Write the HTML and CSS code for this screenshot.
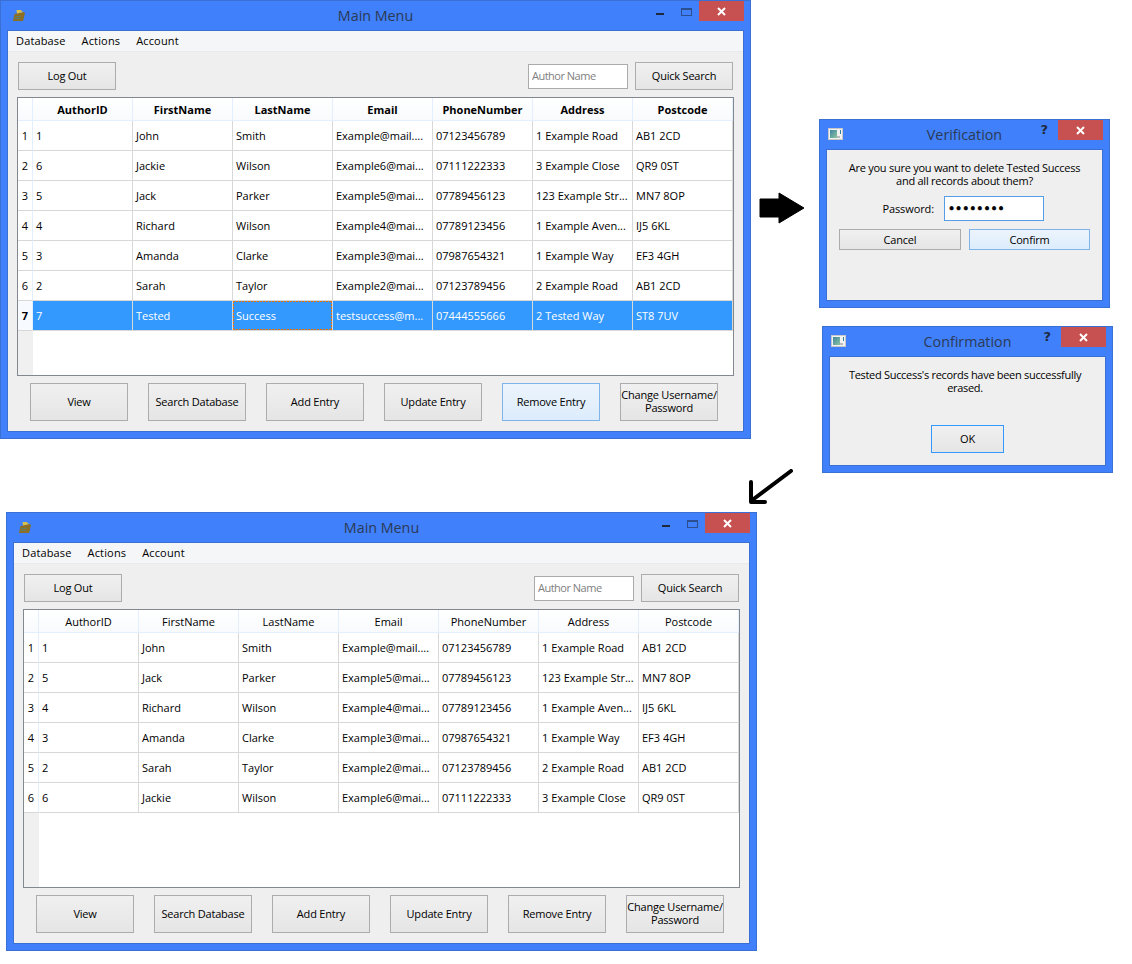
FILE: index.html
```html
<!DOCTYPE html>
<html lang="en">
<head>
    <meta charset="UTF-8">
    <meta name="viewport" content="width=device-width, initial-scale=1.0">
    <title>Remove Entry Walkthrough</title>
    <link rel="stylesheet" href="styles.css">
</head>
<body>
    <svg width="0" height="0" class="defs">
        <defs>
            <linearGradient id="dialog-fill" x1="0" y1="0" x2="1" y2="1">
                <stop offset="0" stop-color="#3f86a0"/>
                <stop offset="1" stop-color="#8cc4a0"/>
            </linearGradient>
        </defs>
        <symbol id="app-icon" viewBox="0 0 14 14">
            <path d="M2.5 5 L11.5 3 L13 4 L11 12 L1 12 Z" fill="#8c6f22"/>
            <path d="M4.5 1 L9 1 L10 2.5 L11.5 3 L5 4.5 Z" fill="#d8c04a"/>
            <path d="M3 7.5 H9 M2.6 9.5 H8" stroke="#5f7f6a" stroke-width="1"/>
        </symbol>
        <symbol id="dialog-icon" viewBox="0 0 15 12">
            <rect x=".5" y=".5" width="14" height="11" fill="#f2f2f2" stroke="#c8c8c8"/>
            <rect x="2" y="2" width="7" height="8" fill="url(#dialog-fill)"/>
            <rect x="9" y="8" width="3" height="2" fill="#bcbcbc"/>
            <rect x="12" y="2" width="1" height="4" fill="#2f7fa0"/>
        </symbol>
        <symbol id="close-x" viewBox="0 0 9 9">
            <path d="M1 1 L8 8 M8 1 L1 8" stroke="#ffffff" stroke-width="2" fill="none"/>
        </symbol>
    </svg>

    <!-- main menu, row 7 selected -->
    <div class="window main-window window-before">
        <div class="titlebar">
            <svg class="app-icon" width="14" height="14"><use href="#app-icon"/></svg>
            <span class="title">Main Menu</span>
            <div class="controls">
                <span class="btn-min"></span>
                <span class="btn-max"></span>
                <span class="btn-close"><svg width="9" height="9"><use href="#close-x"/></svg></span>
            </div>
        </div>
        <div class="client">
            <div class="menubar">
                <span>Database</span>
                <span>Actions</span>
                <span>Account</span>
            </div>
            <div class="content">
                <div class="toolbar">
                    <button class="btn toolbar-btn">Log Out</button>
                    <div class="spacer"></div>
                    <input class="search" type="text" placeholder="Author Name">
                    <button class="btn toolbar-btn">Quick Search</button>
                </div>
                <div class="table-frame">
                    <table class="grid bold-head">
                        <thead>
                            <tr><th class="corner"></th><th>AuthorID</th><th>FirstName</th><th>LastName</th><th>Email</th><th>PhoneNumber</th><th>Address</th><th>Postcode</th></tr>
                        </thead>
                        <tbody>
                            <tr><th>1</th><td>1</td><td>John</td><td>Smith</td><td>Example@mail....</td><td>07123456789</td><td>1 Example Road</td><td>AB1 2CD</td></tr>
                            <tr><th>2</th><td>6</td><td>Jackie</td><td>Wilson</td><td>Example6@mai...</td><td>07111222333</td><td>3 Example Close</td><td>QR9 0ST</td></tr>
                            <tr><th>3</th><td>5</td><td>Jack</td><td>Parker</td><td>Example5@mai...</td><td>07789456123</td><td>123 Example Str...</td><td>MN7 8OP</td></tr>
                            <tr><th>4</th><td>4</td><td>Richard</td><td>Wilson</td><td>Example4@mai...</td><td>07789123456</td><td>1 Example Aven...</td><td>IJ5 6KL</td></tr>
                            <tr><th>5</th><td>3</td><td>Amanda</td><td>Clarke</td><td>Example3@mai...</td><td>07987654321</td><td>1 Example Way</td><td>EF3 4GH</td></tr>
                            <tr><th>6</th><td>2</td><td>Sarah</td><td>Taylor</td><td>Example2@mai...</td><td>07123789456</td><td>2 Example Road</td><td>AB1 2CD</td></tr>
                            <tr class="selected"><th>7</th><td>7</td><td>Tested</td><td class="focus">Success</td><td>testsuccess@m...</td><td>07444555666</td><td>2 Tested Way</td><td>ST8 7UV</td></tr>
                        </tbody>
                    </table>
                </div>
                <div class="actions">
                    <button class="btn">View</button>
                    <button class="btn">Search Database</button>
                    <button class="btn">Add Entry</button>
                    <button class="btn">Update Entry</button>
                    <button class="btn btn-hover">Remove Entry</button>
                    <button class="btn">Change Username/<br>Password</button>
                </div>
            </div>
        </div>
    </div>

    <svg class="arrow arrow-right" width="46" height="32" viewBox="0 0 46 32">
        <path d="M1 7 H20 V1 L45 16 L20 31 V25 H1 Z" fill="#000" stroke="#000" stroke-linejoin="round"/>
    </svg>

    <!-- password prompt -->
    <div class="window dialog dialog-verify">
        <div class="titlebar">
            <svg class="dialog-icon" width="15" height="12"><use href="#dialog-icon"/></svg>
            <span class="title">Verification</span>
            <div class="controls">
                <span class="btn-help">?</span>
                <span class="btn-close"><svg width="9" height="9"><use href="#close-x"/></svg></span>
            </div>
        </div>
        <div class="client dialog-body">
            <p class="message">Are you sure you want to delete Tested Success<br>and all records about them?</p>
            <div class="password-row">
                <label for="password">Password:</label>
                <input id="password" class="password" type="password" value="12345678">
            </div>
            <div class="dialog-buttons">
                <button class="btn">Cancel</button>
                <button class="btn btn-hover">Confirm</button>
            </div>
        </div>
    </div>

    <!-- erased message -->
    <div class="window dialog dialog-confirm">
        <div class="titlebar">
            <svg class="dialog-icon" width="15" height="12"><use href="#dialog-icon"/></svg>
            <span class="title">Confirmation</span>
            <div class="controls">
                <span class="btn-help">?</span>
                <span class="btn-close"><svg width="9" height="9"><use href="#close-x"/></svg></span>
            </div>
        </div>
        <div class="client dialog-body">
            <p class="message">Tested Success's records have been successfully<br>erased.</p>
            <button class="btn btn-ok">OK</button>
        </div>
    </div>

    <svg class="arrow arrow-down" width="46" height="36" viewBox="0 0 46 36">
        <path d="M43 2 L3 32 M3 13 V33 H17" fill="none" stroke="#000" stroke-width="4" stroke-linecap="round" stroke-linejoin="round"/>
    </svg>

    <!-- main menu after the delete -->
    <div class="window main-window window-after">
        <div class="titlebar">
            <svg class="app-icon" width="14" height="14"><use href="#app-icon"/></svg>
            <span class="title">Main Menu</span>
            <div class="controls">
                <span class="btn-min"></span>
                <span class="btn-max"></span>
                <span class="btn-close"><svg width="9" height="9"><use href="#close-x"/></svg></span>
            </div>
        </div>
        <div class="client">
            <div class="menubar">
                <span>Database</span>
                <span>Actions</span>
                <span>Account</span>
            </div>
            <div class="content">
                <div class="toolbar">
                    <button class="btn toolbar-btn">Log Out</button>
                    <div class="spacer"></div>
                    <input class="search" type="text" placeholder="Author Name">
                    <button class="btn toolbar-btn">Quick Search</button>
                </div>
                <div class="table-frame">
                    <table class="grid">
                        <thead>
                            <tr><th class="corner"></th><th>AuthorID</th><th>FirstName</th><th>LastName</th><th>Email</th><th>PhoneNumber</th><th>Address</th><th>Postcode</th></tr>
                        </thead>
                        <tbody>
                            <tr><th>1</th><td>1</td><td>John</td><td>Smith</td><td>Example@mail....</td><td>07123456789</td><td>1 Example Road</td><td>AB1 2CD</td></tr>
                            <tr><th>2</th><td>5</td><td>Jack</td><td>Parker</td><td>Example5@mai...</td><td>07789456123</td><td>123 Example Str...</td><td>MN7 8OP</td></tr>
                            <tr><th>3</th><td>4</td><td>Richard</td><td>Wilson</td><td>Example4@mai...</td><td>07789123456</td><td>1 Example Aven...</td><td>IJ5 6KL</td></tr>
                            <tr><th>4</th><td>3</td><td>Amanda</td><td>Clarke</td><td>Example3@mai...</td><td>07987654321</td><td>1 Example Way</td><td>EF3 4GH</td></tr>
                            <tr><th>5</th><td>2</td><td>Sarah</td><td>Taylor</td><td>Example2@mai...</td><td>07123789456</td><td>2 Example Road</td><td>AB1 2CD</td></tr>
                            <tr><th>6</th><td>6</td><td>Jackie</td><td>Wilson</td><td>Example6@mai...</td><td>07111222333</td><td>3 Example Close</td><td>QR9 0ST</td></tr>
                        </tbody>
                    </table>
                </div>
                <div class="actions">
                    <button class="btn">View</button>
                    <button class="btn">Search Database</button>
                    <button class="btn">Add Entry</button>
                    <button class="btn">Update Entry</button>
                    <button class="btn">Remove Entry</button>
                    <button class="btn">Change Username/<br>Password</button>
                </div>
            </div>
        </div>
    </div>
</body>
</html>
```

FILE: styles.css
```css
/* General Reset */
* {
    margin: 0;
    padding: 0;
    box-sizing: border-box;
}

body {
    position: relative;
    width: 1132px;
    height: 964px;
    overflow: hidden;
    background-color: #ffffff;
    color: #000000;
    font-family: "Open Sans", sans-serif;
    font-size: 11px;
}

.defs {
    position: absolute;
}

/* Windows sit on a free canvas */
.window {
    position: absolute;
    display: flex;
    flex-direction: column;
    background-color: #4080fa;
    border: 1px solid #3a70d4;
    padding: 0 6px 6px;
}

.main-window {
    width: 751px;
    height: 439px;
}

.window-before {
    left: 0;
    top: 0;
}

.window-after {
    left: 6px;
    top: 512px;
}

.dialog-verify {
    left: 819px;
    top: 119px;
    width: 291px;
    height: 189px;
}

.dialog-confirm {
    left: 822px;
    top: 326px;
    width: 291px;
    height: 147px;
}

/* Title bar */
.titlebar {
    position: relative;
    flex: none;
    height: 29px;
    display: flex;
    align-items: center;
    justify-content: center;
}

.title {
    font-size: 14.3px;
    color: #2b3a55;
    margin-bottom: 1px;
}

.app-icon {
    position: absolute;
    left: 5px;
    top: 8px;
}

.dialog-icon {
    position: absolute;
    left: 2px;
    top: 8px;
}

.controls {
    position: absolute;
    right: 0;
    top: 0;
    height: 20px;
}

.btn-close {
    position: absolute;
    right: 0;
    top: 0;
    width: 45px;
    height: 20px;
    background-color: #c75050;
    display: flex;
    align-items: center;
    justify-content: center;
}

.btn-min {
    position: absolute;
    right: 80px;
    top: 12px;
    width: 8px;
    height: 2px;
    background-color: #1f2a3f;
}

.btn-max {
    position: absolute;
    right: 52px;
    top: 7px;
    width: 11px;
    height: 8px;
    border: 1px solid #2c4f8f;
    border-top-width: 2px;
}

.btn-help {
    position: absolute;
    right: 55px;
    top: 2px;
    color: #1f2a3f;
    font-family: "DejaVu Sans", sans-serif;
    font-size: 13px;
    font-weight: bold;
}

/* Client area */
.client {
    flex: 1;
    background-color: #efefef;
    border: 1px solid #3a70d4;
    display: flex;
    flex-direction: column;
}

.menubar {
    flex: none;
    height: 21px;
    display: flex;
    align-items: center;
    gap: 16px;
    padding: 0 0 2px 8px;
    background-color: #f5f6f7;
    border-bottom: 1px solid #e8e9ea;
    letter-spacing: .15px;
}

.content {
    padding: 10px 9px 0;
    display: flex;
    flex-direction: column;
}

.toolbar {
    display: flex;
    align-items: center;
    padding: 0 1px;
    height: 28px;
}

.spacer {
    flex: 1;
}

.btn {
    width: 98px;
    height: 38px;
    padding: 0 0 2px;
    border: 1px solid #acacac;
    background: linear-gradient(#f0f0f0, #e5e5e5);
    color: #000000;
    font-family: inherit;
    font-size: 11px;
    line-height: 13px;
    letter-spacing: -.2px;
    white-space: nowrap;
}

.btn-hover {
    border-color: #7eb4ea;
    background: linear-gradient(#ecf4fc, #dcecfc);
}

.toolbar-btn {
    height: 28px;
}

.search {
    width: 100px;
    height: 25px;
    margin-right: 7px;
    padding: 0 0 2px 3px;
    border: 1px solid #ababab;
    background-color: #ffffff;
    font-family: inherit;
    font-size: 11px;
    letter-spacing: -.5px;
}

.search::placeholder {
    color: #808080;
}

/* Table */
.table-frame {
    margin-top: 7px;
    width: 717px;
    height: 279px;
    border: 1px solid #828790;
    background: linear-gradient(to right, #f0f0f0 15px, #ffffff 15px);
}

.grid {
    table-layout: fixed;
    width: 715px;
    border-collapse: separate;
    border-spacing: 0;
}

.grid th,
.grid td {
    overflow: hidden;
    white-space: nowrap;
    font-weight: normal;
}

.grid thead th {
    width: 100px;
    height: 23px;
    background: linear-gradient(#ffffff, #f8fafd);
    border-right: 1px solid #e3efff;
    border-bottom: 1px solid #e3efff;
    text-align: center;
}

.grid thead th.corner {
    width: 15px;
}

.bold-head thead th {
    font-weight: bold;
}

.grid tbody th {
    height: 30px;
    background-color: #ffffff;
    border-right: 1px solid #e3efff;
    border-bottom: 1px solid #d8d8d8;
    text-align: center;
}

.grid td {
    height: 30px;
    padding-left: 3px;
    background-color: #ffffff;
    border-right: 1px solid #d8d8d8;
    border-bottom: 1px solid #d8d8d8;
}

.grid tr.selected td {
    background-color: #3399ff;
    color: #ffffff;
}

.grid tr.selected th {
    font-weight: bold;
    background-color: #f7fafe;
}

/* dotted focus box round the current cell, drawn as stripes */
.grid tr.selected td.focus {
    background-image:
        repeating-linear-gradient(90deg, #e8700a 0 2px, transparent 2px 3px),
        repeating-linear-gradient(90deg, #e8700a 0 2px, transparent 2px 3px),
        repeating-linear-gradient(0deg, #e8700a 0 2px, transparent 2px 3px),
        repeating-linear-gradient(0deg, #e8700a 0 2px, transparent 2px 3px);
    background-size: 100% 1px, 100% 1px, 1px 100%, 1px 100%;
    background-position: left top, left bottom, left top, right top;
    background-repeat: no-repeat;
    background-origin: padding-box;
    background-clip: padding-box;
}

.actions {
    margin-top: 7px;
    padding-left: 13px;
    display: flex;
    gap: 20px;
}

/* Dialogs */
.message {
    padding-top: 11px;
    text-align: center;
    line-height: 13px;
    letter-spacing: -.25px;
}

.dialog-confirm .message {
    padding-right: 5px;
    letter-spacing: -.3px;
}

.password-row {
    margin-top: 9px;
    display: flex;
    align-items: center;
    justify-content: flex-end;
    padding-right: 58px;
    gap: 10px;
}

.password-row label {
    letter-spacing: -.1px;
}

.password {
    width: 100px;
    height: 25px;
    padding-left: 3px;
    border: 1px solid #569de5;
    background-color: #ffffff;
    font-family: "DejaVu Sans", sans-serif;
    font-size: 12px;
    -webkit-text-stroke: .6px #000000;
    outline: none;
}

.dialog-buttons {
    margin-top: 8px;
    padding-left: 12px;
    display: flex;
    gap: 8px;
}

.dialog-buttons .btn {
    width: 122px;
    height: 21px;
    padding: 0;
}

.dialog-buttons .btn-hover {
    width: 121px;
}

.btn-ok {
    align-self: center;
    width: 73px;
    height: 28px;
    margin-top: 31px;
    border-color: #3399ff;
}

/* Hand drawn arrows */
.arrow {
    position: absolute;
}

.arrow-right {
    left: 759px;
    top: 192px;
}

.arrow-down {
    left: 748px;
    top: 469px;
}
```
